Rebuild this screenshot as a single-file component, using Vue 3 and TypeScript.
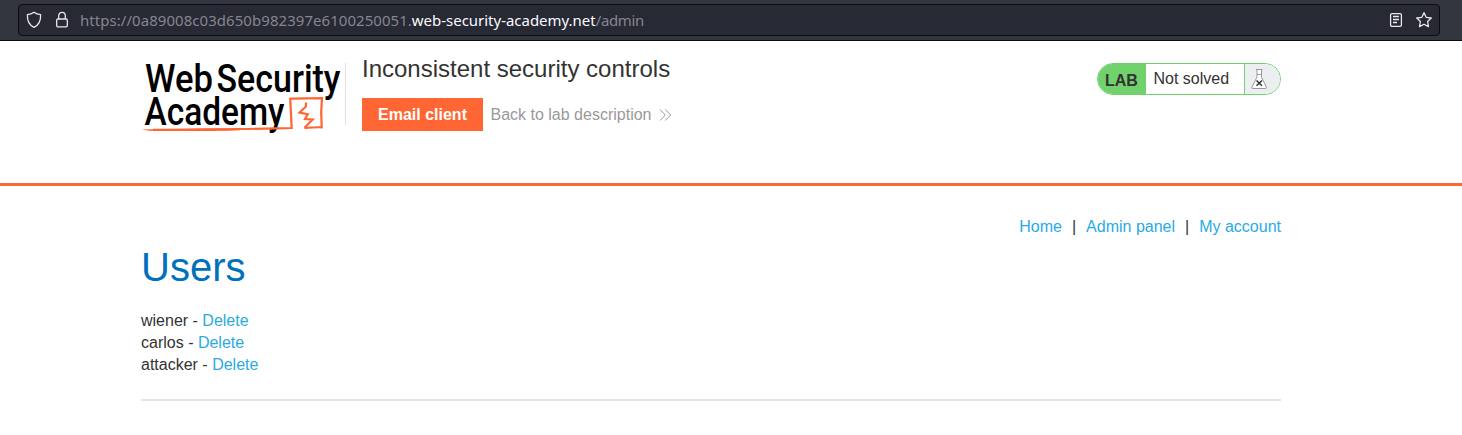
<script setup lang="ts">
interface User {
  name: string
}

const users: User[] = [{ name: 'wiener' }, { name: 'carlos' }, { name: 'attacker' }]
const links: string[] = ['Home', 'Admin panel', 'My account']
</script>

<template>
  <div class="page">
    <div class="browser">
      <div class="address">
        <svg class="shield" width="16" height="18" viewBox="0 0 16 18">
          <path d="M8 1.2C10 2.8 12.2 3.5 14.6 3.7C14.9 9.300 13 13.900 8 16.300C3 13.900 1.100 9.300 1.400 3.700C3.800 3.500 6 2.800 8 1.200Z" />
        </svg>
        <svg class="lock" width="14" height="18" viewBox="0 0 14 18">
          <path d="M3.700 8V4.800C3.700 0.200 10.300 0.200 10.300 4.800V8" />
          <rect x="1.700" y="8" width="10.600" height="7.900" rx="1.300" />
        </svg>
        <span class="url"><span class="sub">https://0a89008c03d650b982397e6100250051.</span><b>web-security-academy.net</b><span class="path">/admin</span></span>
        <svg class="reader" width="14" height="16" viewBox="0 0 14 16">
          <rect x="1.600" y="1.600" width="10.800" height="12.800" rx="1.300" />
          <path d="M4 4.500H10M4 7.500H10M4 10.500H8" />
        </svg>
        <svg class="star" width="18" height="18" viewBox="0 0 18 18">
          <path d="M9 1.700L11.200 6.300L16.300 7L12.600 10.500L13.500 15.600L9 13.200L4.500 15.600L5.400 10.500L1.700 7L6.800 6.300Z" />
        </svg>
      </div>
    </div>

    <header class="banner">
      <div class="container head">
        <svg class="logo" width="204" height="76" viewBox="0 0 204 76">
          <g class="wordmark">
            <text x="4" y="31.500" textLength="68" lengthAdjust="spacingAndGlyphs">Web</text>
            <text x="75.500" y="31.500" textLength="124" lengthAdjust="spacingAndGlyphs">Security</text>
            <text x="3.500" y="64.500" textLength="140" lengthAdjust="spacingAndGlyphs">Academy</text>
          </g>
          <path class="swash" d="M12 69.900C45 69.900 70 69.300 99 69C120 68.800 135 68.300 150.700 68L150 54L149.200 38.600C160 38 170 38.500 181 38.200L180.200 52L180.700 67.300C175 66.900 169 68 163.500 67.800" />
          <path class="under" d="M0.500 69.500L20 69L99 68.200L99 70.200C70 71.300 30 71.300 8 70.800Z" />
          <path class="bolt" d="M165.200 42.500L164.700 46.700L158.500 52.500L166.700 54.200L164 59L171.700 59.500L163.500 67.800" />
        </svg>
        <div class="title-block">
          <h2>Inconsistent security controls</h2>
          <div class="actions">
            <a class="button">Email client</a>
            <a class="back">Back to lab description</a>
            <svg class="chevrons" width="13" height="12" viewBox="0 0 13 12">
              <path d="M1 0.500L6.300 6L1 11.500M6.300 0.500L11.600 6L6.300 11.500" />
            </svg>
          </div>
        </div>
        <div class="status">
          <span class="lab">LAB</span>
          <span class="state">Not solved</span>
          <span class="flask">
            <svg width="18" height="22" viewBox="0 0 18 22">
              <path class="glass" d="M6 1.500H12.500M7 1.500V9L2 19Q1.200 20.500 2.500 20.500H15.500Q16.900 20.500 16.200 19L11.500 9V1.500M7 6.500H11.500" />
              <path class="cross" d="M6.500 12.500L12 17.800M12 12.500L6.500 17.800" />
            </svg>
          </span>
        </div>
      </div>
    </header>

    <main class="container">
      <nav class="links">
        <template v-for="(link, i) in links" :key="link">
          <span v-if="i > 0" class="sep">|</span>
          <a>{{ link }}</a>
        </template>
      </nav>
      <h1>Users</h1>
      <div v-for="user in users" :key="user.name" class="user">
        {{ user.name }} - <a>Delete</a>
      </div>
      <hr />
    </main>
  </div>
</template>

<style>
body {
  margin: 0;
  background: #fff;
}
</style>

<style scoped>
.page {
  height: 435px;
  overflow: hidden;
  background: #fff;
  color: #333332;
  font: 16px/22px "Liberation Sans", Arial, sans-serif;
}
.browser {
  box-sizing: border-box;
  height: 41px;
  padding: 4px 22px 0 18px;
  background: #33363f;
  border-bottom: 1px solid #0c0d10;
}
.address {
  box-sizing: border-box;
  height: 32px;
  display: flex;
  align-items: center;
  padding: 0 6px 0 7px;
  background: #272935;
  border: 1px solid #0c0d12;
  border-radius: 4px;
}
.address svg {
  flex: none;
  fill: none;
  stroke: #e8e8ea;
  stroke-width: 1.3;
  stroke-linejoin: round;
}
.lock {
  margin-left: 13px;
}
.url {
  flex: 1;
  margin-left: 11px;
  color: #85868e;
  font: 14.960px/20px "Noto Sans", sans-serif;
  white-space: nowrap;
}
.url b {
  color: #fbfbfe;
  font-weight: 400;
}
.sub {
  letter-spacing: 0.073px;
}
.path {
  letter-spacing: -0.300px;
}
.star {
  margin-left: 12px;
}
.container {
  width: 1140px;
  margin-left: 141px;
}
.banner {
  box-sizing: border-box;
  height: 145px;
  border-bottom: 3px solid #ff6633;
}
.head {
  display: flex;
  align-items: flex-start;
}
.logo {
  margin-top: 19px;
  flex: none;
  overflow: visible;
}
.wordmark {
  font: 500 38.5px Roboto, sans-serif;
  fill: #000;
}
.swash {
  fill: none;
  stroke: #ff6633;
  stroke-width: 2.2;
}
.under {
  fill: #ff6633;
}
.bolt {
  fill: none;
  stroke: #ff6633;
  stroke-width: 2.2;
}
.title-block {
  position: relative;
  margin-top: 13px;
  padding-left: 17px;
}
.title-block::before {
  content: "";
  position: absolute;
  left: 0;
  top: 9px;
  width: 1px;
  height: 62px;
  background: #e0e0e0;
}
h2 {
  margin: 0;
  font-size: 24px;
  line-height: 30px;
  font-weight: 400;
}
.actions {
  display: flex;
  align-items: center;
  height: 33px;
  margin-top: 14px;
}
.button {
  width: 121px;
  background: #ff6633;
  font-weight: 700;
  line-height: 33px;
  text-align: center;
}
.back {
  margin-left: 7.500px;
}
.chevrons {
  margin-left: 8px;
  fill: none;
  stroke: #999;
  stroke-width: 1;
}
.status {
  box-sizing: border-box;
  display: flex;
  width: 184px;
  height: 32px;
  margin: 22px 0 0 auto;
  border: 1px solid #70d16d;
  border-radius: 16px;
  overflow: hidden;
  line-height: 30px;
}
.lab {
  box-sizing: border-box;
  width: 48px;
  padding-left: 7px;
  background: #70d16d;
  font-weight: 700;
  line-height: 33px;
}
.state {
  flex: 1;
  padding-left: 7.500px;
}
.flask {
  box-sizing: border-box;
  width: 36px;
  padding: 4px 0 0 5px;
  border-left: 1px solid #70d16d;
  background: #ebeff2;
}
.flask svg {
  display: block;
}
.glass {
  fill: #fff;
  stroke: #999;
}
.cross {
  stroke: #333;
  stroke-width: 1.500;
}
.links {
  display: flex;
  justify-content: flex-end;
  padding-top: 30px;
}
a {
  color: #29abe2;
}
a.button {
  color: #fff;
}
a.back {
  color: #999;
}
.sep {
  margin: 0 10px;
}
h1 {
  margin: 5px 0 19px;
  color: #0071bc;
  font-size: 40px;
  line-height: 48px;
  font-weight: 400;
}
hr {
  height: 2px;
  margin: 23px 0 0;
  border: 0;
  background: #e4e4e4;
}
</style>
